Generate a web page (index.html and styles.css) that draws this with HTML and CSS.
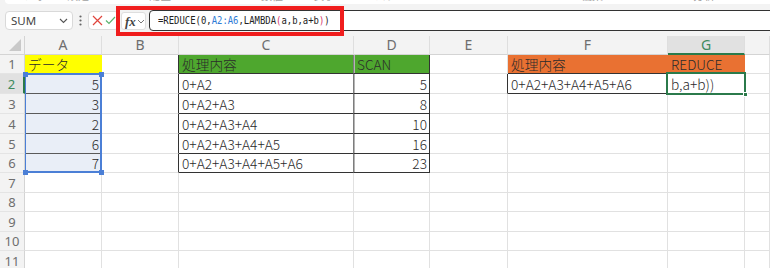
FILE: index.html
```html
<!DOCTYPE html>
<html lang="ja">
<head>
<meta charset="utf-8">
<title>REDUCE</title>
<link rel="stylesheet" href="styles.css">
</head>
<body>
<div class="ribbon">
  <div class="ribbon-text">
    <span class="rt w1">フォント設定</span>
    <span class="rt w2">配置</span>
    <span class="rt w3">数値</span>
    <span class="rt w4">表示</span>
    <span class="rt w5">スタイル</span>
    <span class="rt w6">セル</span>
    <span class="rt w7">編集</span>
    <span class="rt w8">分析</span>
  </div>
</div>
<div class="fbar">
  <div class="namebox"><span>SUM</span>
    <svg width="9" height="6" viewBox="0 0 9 6"><path d="M1 1l3.5 3.5L8 1" fill="none" stroke="#555" stroke-width="1.1"/></svg>
  </div>
  <div class="dots"><svg width="3" height="11" viewBox="0 0 3 11"><circle cx="1.5" cy="1.5" r="1.1" fill="#666"/><circle cx="1.5" cy="5.5" r="1.1" fill="#666"/><circle cx="1.5" cy="9.5" r="1.1" fill="#666"/></svg></div>
  <div class="editbtns">
    <svg width="11" height="11" viewBox="0 0 11 11"><path d="M1 1l9 9M10 1l-9 9" stroke="#e0453d" stroke-width="1.2"/></svg>
    <svg width="11" height="9" viewBox="0 0 11 9"><path d="M1 4.5l3 3L10 1" fill="none" stroke="#5bb36f" stroke-width="1.2"/></svg>
  </div>
  <div class="fxbox"><span class="fx">fx</span>
    <svg width="8" height="5" viewBox="0 0 8 5"><path d="M1 1l3 3 3-3" fill="none" stroke="#777" stroke-width="1"/></svg>
  </div>
  <div class="finput"><span class="ftext">=REDUCE(0,<span class="ref">A2:A6</span>,LAMBDA<span class="par">(</span>a,b,a+b<span class="par">)</span>)</span></div>
</div>

<div class="sheet">
  <!-- header row -->
  <div class="c corner"><svg width="14" height="14" viewBox="0 0 14 14"><path d="M13 1V13H1z" fill="#c9c9c9"/></svg></div>
  <div class="c hd">A</div>
  <div class="c hd">B</div>
  <div class="c hd">C</div>
  <div class="c hd">D</div>
  <div class="c hd">E</div>
  <div class="c hd">F</div>
  <div class="c hd hd-act">G</div>
  <div class="c hd"></div>

  <!-- row 1 -->
  <div class="c rh">1</div>
  <div class="c yel">データ</div>
  <div class="c bl"></div>
  <div class="c grn tc">処理内容</div>
  <div class="c grn td">SCAN</div>
  <div class="c"></div>
  <div class="c org f1">処理内容</div>
  <div class="c org">REDUCE</div>
  <div class="c"></div>

  <!-- row 2 -->
  <div class="c rh rh-act">2</div>
  <div class="c sel r">5</div>
  <div class="c bl"></div>
  <div class="c tc">0+A2</div>
  <div class="c td r">5</div>
  <div class="c el"></div>
  <div class="c f2">0+A2+A3+A4+A5+A6</div>
  <div class="c g2">b,a+b))</div>
  <div class="c"></div>

  <!-- row 3 -->
  <div class="c rh">3</div>
  <div class="c sel r">3</div>
  <div class="c bl"></div>
  <div class="c tc">0+A2+A3</div>
  <div class="c td r">8</div>
  <div class="c"></div>
  <div class="c"></div>
  <div class="c"></div>
  <div class="c"></div>

  <!-- row 4 -->
  <div class="c rh">4</div>
  <div class="c sel r">2</div>
  <div class="c bl"></div>
  <div class="c tc">0+A2+A3+A4</div>
  <div class="c td r">10</div>
  <div class="c"></div>
  <div class="c"></div>
  <div class="c"></div>
  <div class="c"></div>

  <!-- row 5 -->
  <div class="c rh">5</div>
  <div class="c sel r">6</div>
  <div class="c bl"></div>
  <div class="c tc">0+A2+A3+A4+A5</div>
  <div class="c td r">16</div>
  <div class="c"></div>
  <div class="c"></div>
  <div class="c"></div>
  <div class="c"></div>

  <!-- row 6 -->
  <div class="c rh">6</div>
  <div class="c sel sel-last r">7</div>
  <div class="c bl"></div>
  <div class="c tc">0+A2+A3+A4+A5+A6</div>
  <div class="c td r">23</div>
  <div class="c"></div>
  <div class="c"></div>
  <div class="c"></div>
  <div class="c"></div>

  <!-- rows 7-11 -->
  <div class="c rh">7</div><div class="c"></div><div class="c"></div><div class="c"></div><div class="c"></div><div class="c"></div><div class="c"></div><div class="c"></div><div class="c"></div>
  <div class="c rh">8</div><div class="c"></div><div class="c"></div><div class="c"></div><div class="c"></div><div class="c"></div><div class="c"></div><div class="c"></div><div class="c"></div>
  <div class="c rh">9</div><div class="c"></div><div class="c"></div><div class="c"></div><div class="c"></div><div class="c"></div><div class="c"></div><div class="c"></div><div class="c"></div>
  <div class="c rh">10</div><div class="c"></div><div class="c"></div><div class="c"></div><div class="c"></div><div class="c"></div><div class="c"></div><div class="c"></div><div class="c"></div>
  <div class="c rh">11</div><div class="c"></div><div class="c"></div><div class="c"></div><div class="c"></div><div class="c"></div><div class="c"></div><div class="c"></div><div class="c"></div>
</div>

<div class="redbox"></div>
<div class="range">
  <i class="sq tl"></i><i class="sq tr"></i><i class="sq bl2"></i><i class="sq br"></i>
</div>
<div class="active"><i class="handle"></i></div>
</body>
</html>
```

FILE: styles.css
```css
* { box-sizing: border-box; }
html, body { margin: 0; padding: 0; }
body {
  width: 770px;
  height: 268px;
  overflow: hidden;
  background: #f3f3f3;
  position: relative;
  font-family: "Noto Sans", "Noto Sans CJK JP", sans-serif;
}

/* ribbon remnant */
.ribbon {
  height: 4px;
  margin-left: 5px;
  background: #fff;
  border-bottom-left-radius: 4px;
  overflow: hidden;
}
.ribbon-text {
  margin-top: -12px;
  height: 15px;
  display: flex;
  font-size: 11px;
  line-height: 15px;
  color: #a0a0a0;
  font-family: "Noto Sans CJK JP", sans-serif;
}
.rt { display: inline-block; }
.w1 { margin-left: 18px; }
.w2 { margin-left: 60px; }
.w3 { margin-left: 90px; }
.w4 { margin-left: 30px; }
.w5 { margin-left: 40px; }
.w6 { margin-left: 60px; }
.w7 { margin-left: 80px; }
.w8 { margin-left: 90px; }

/* formula bar */
.fbar {
  height: 32px;
  padding: 6px 0 0 5px;
  display: flex;
  align-items: flex-start;
}
.namebox {
  width: 68px;
  height: 19px;
  margin-top: 1px;
  background: #fff;
  border: 1px solid #d9d9d9;
  border-radius: 4px;
  display: flex;
  align-items: center;
  justify-content: space-between;
  padding: 0 4px 0 5px;
  font-size: 11.5px;
  color: #444;
}
.dots {
  width: 15px;
  height: 21px;
  display: flex;
  align-items: center;
  justify-content: center;
}
.editbtns {
  width: 31px;
  height: 19px;
  margin-top: 1px;
  background: #fff;
  border: 1px solid #dcdcdc;
  border-radius: 4px;
  display: flex;
  align-items: center;
  gap: 2px;
  padding-left: 3px;
}
.fxbox {
  width: 25px;
  height: 18px;
  margin: 2px 0 0 2px;
  background: #fff;
  border: 1px solid #dedede;
  border-radius: 3px;
  display: flex;
  align-items: center;
  gap: 1px;
  padding-left: 3px;
}
.fx {
  font-family: "Liberation Serif", serif;
  font-style: italic;
  font-weight: bold;
  font-size: 13px;
  color: #444;
  line-height: 1;
}
.finput {
  flex: 1;
  height: 21px;
  margin: 0 -12px 0 3px;
  background: #fff;
  border: 1px solid #333;
  border-radius: 4px;
  padding-left: 8px;
  display: flex;
  align-items: center;
  overflow: hidden;
}
.ftext {
  display: inline-block;
  font-family: "DejaVu Sans Mono", monospace;
  font-size: 11px;
  color: #222;
  white-space: nowrap;
  transform: scaleX(0.81);
  transform-origin: left center;
}
.ref { color: #2f7bd6; }
.par { color: #d6336c; }

/* sheet grid */
.sheet {
  display: grid;
  grid-template-columns: 25px 77px 77px 175px 76px 78px 160px 77px 1fr;
  grid-template-rows: 19px 19px 20px 20px 20px 20px 19px 20px 19px 20px 19px 20px;
  background: #fff;
}
.c {
  border-right: 1px solid #e1e1e1;
  border-bottom: 1px solid #e1e1e1;
  background: #fff;
  display: flex;
  align-items: center;
  padding: 0 3px;
  font-family: "Noto Sans CJK JP", sans-serif;
  font-weight: 300;
  font-size: 13.7px;
  line-height: 16px;
  color: #2b2b2b;
  white-space: nowrap;
  overflow: hidden;
}
.r { justify-content: flex-end; padding-right: 2px; }

.corner {
  background: #f3f3f3;
  border-right-color: #d4d4d4;
  border-bottom-color: #d4d4d4;
  justify-content: flex-end;
  align-items: flex-end;
  padding: 0 2px 2px 0;
}
.hd {
  background: #f3f3f3;
  border-right-color: #dedede;
  border-bottom-color: #d4d4d4;
  justify-content: center;
  font-family: "Noto Sans", sans-serif;
  font-weight: 400;
  color: #6e6e6e;
  font-size: 14px;
}
.hd-act {
  background: #e1e1e1;
  color: #3f8a5e;
  border-bottom: 2px solid #2b7a4b;
}
.rh {
  background: #f3f3f3;
  border-right-color: #d4d4d4;
  border-bottom-color: #e4e4e4;
  justify-content: center;
  font-family: "Noto Sans", sans-serif;
  font-weight: 400;
  color: #6e6e6e;
  font-size: 13px;
  padding: 0;
}
.rh-act {
  background: #e1e1e1;
  color: #3f8a5e;
  border-right: 2px solid #2b7a4b;
}

.yel { background: #ffff00; border-color: #ffff00; }
.grn { background: #4ea72e; }
.org { background: #e97132; border-color: #e97132; }
.sel { background: #e9eef7; border-right-color: #e9eef7; border-bottom-color: #5a5a5a; }
.sel-last { border-bottom-color: #e9eef7; }

.bl { border-right-color: #333; }
.tc { border-right-color: #7d7d7d; border-bottom-color: #333; }
.td { border-right-color: #333; border-bottom-color: #333; box-shadow: inset 1px 0 0 #b5b5b5; }
.grn.tc { border-bottom-color: #333; }
.grn.td { border-bottom-color: #333; }
.f1 { border-bottom-color: #333; }
.el { border-right-color: #333; }
.f2 { border-bottom-color: #333; border-right-color: #fff; }

/* overlays */
.redbox {
  position: absolute;
  left: 116px;
  top: 6px;
  width: 228px;
  height: 30px;
  border: 4px solid #f01d1d;
}
.range {
  position: absolute;
  left: 25px;
  top: 73px;
  width: 77px;
  height: 100px;
  border: 2px solid #4b7fd6;
  border-left-width: 1px;
}
.sq {
  position: absolute;
  width: 5px;
  height: 5px;
  background: #4b7fd6;
}
.tl { left: -3px; top: -3px; }
.tr { right: -4px; top: -3px; }
.bl2 { left: -3px; bottom: -4px; }
.br { right: -4px; bottom: -4px; }
.active {
  position: absolute;
  left: 666px;
  top: 72px;
  width: 80px;
  height: 23px;
  border: 2px solid #2b7a4b;
}
.handle {
  position: absolute;
  right: -4px;
  bottom: -4px;
  width: 5px;
  height: 5px;
  background: #2b7a4b;
  border: 1px solid #fff;
}
```
